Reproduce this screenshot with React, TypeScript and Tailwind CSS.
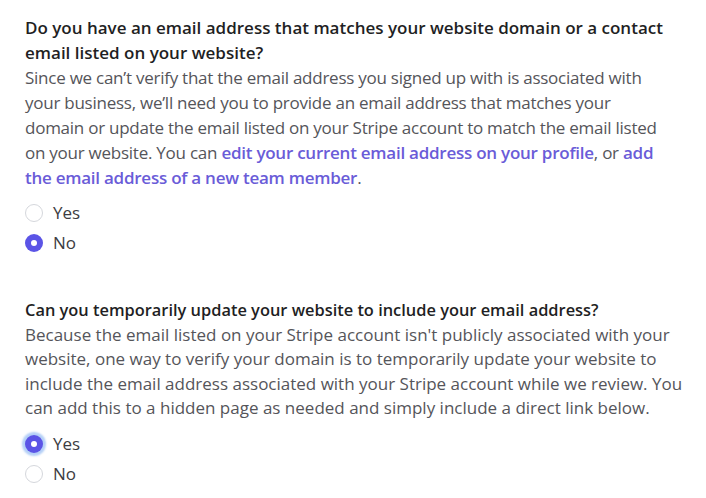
import { useState } from "react"

function Radio({ checked, focused, label, onClick }: { checked: boolean; focused?: boolean; label: string; onClick: () => void }) {
  return (
    <button type="button" onClick={onClick} className="flex h-[30px] items-center gap-[10px] text-left">
      <span
        className={[
          "grid h-[18px] w-[18px] place-items-center rounded-full",
          checked ? "bg-[#5b54e6]" : "border border-[#d5d7dc] bg-white",
          focused ? "shadow-[0_0_2px_3px_rgba(120,170,240,0.55)]" : "",
        ].join(" ")}
      >
        {checked && <span className="h-[6px] w-[6px] rounded-full bg-white" />}
      </span>
      <span className="text-[17px] text-[#3c3c41]">{label}</span>
    </button>
  )
}

export default function App() {
  const [hasEmail, setHasEmail] = useState<"yes" | "no">("no")
  const [canUpdate, setCanUpdate] = useState<"yes" | "no">("yes")

  return (
    <div className="min-h-[498px] w-[706px] bg-white pl-[25px] pt-[15px] font-['Open_Sans',sans-serif]">

      {/* Question 1 */}
      <div className="w-[644px] text-[17px] leading-[25px]">
        <p className="font-semibold text-[#1f1f24]">
          Do you have an email address that matches your website domain or a contact email listed on your website?
        </p>
        <p className="tracking-[-0.25px] text-[#55555a]">
          Since we can’t verify that the email address you signed up with is associated with your business, we’ll need you to provide an email address that matches your domain or update the email listed on your Stripe account to match the email listed on your website. You can{" "}
          <a className="font-semibold text-[#6a5cd8]">edit your current email address on your profile</a>, or{" "}
          <a className="font-semibold text-[#6a5cd8]">add the email address of a new team member</a>.
        </p>
      </div>
      <div className="mt-[8px] flex flex-col">
        <Radio checked={hasEmail === "yes"} label="Yes" onClick={() => setHasEmail("yes")} />
        <Radio checked={hasEmail === "no"} label="No" onClick={() => setHasEmail("no")} />
      </div>

      {/* Question 2 */}
      <div className="mt-[40px] w-[665px] leading-[24.5px]">
        <p className="text-[16.4px] font-semibold text-[#1f1f24]">
          Can you temporarily update your website to include your email address?
        </p>
        <p className="text-[17px] text-[#55555a]">
          Because the email listed on your Stripe account isn't publicly associated with your website, one way to verify your domain is to temporarily update your website to include the email address associated with your Stripe account while we review. You can add this to a hidden page as needed and simply include a direct link below.
        </p>
      </div>
      <div className="mt-[8px] flex flex-col">
        <Radio checked={canUpdate === "yes"} focused label="Yes" onClick={() => setCanUpdate("yes")} />
        <Radio checked={canUpdate === "no"} label="No" onClick={() => setCanUpdate("no")} />
      </div>
    </div>
  )
}
